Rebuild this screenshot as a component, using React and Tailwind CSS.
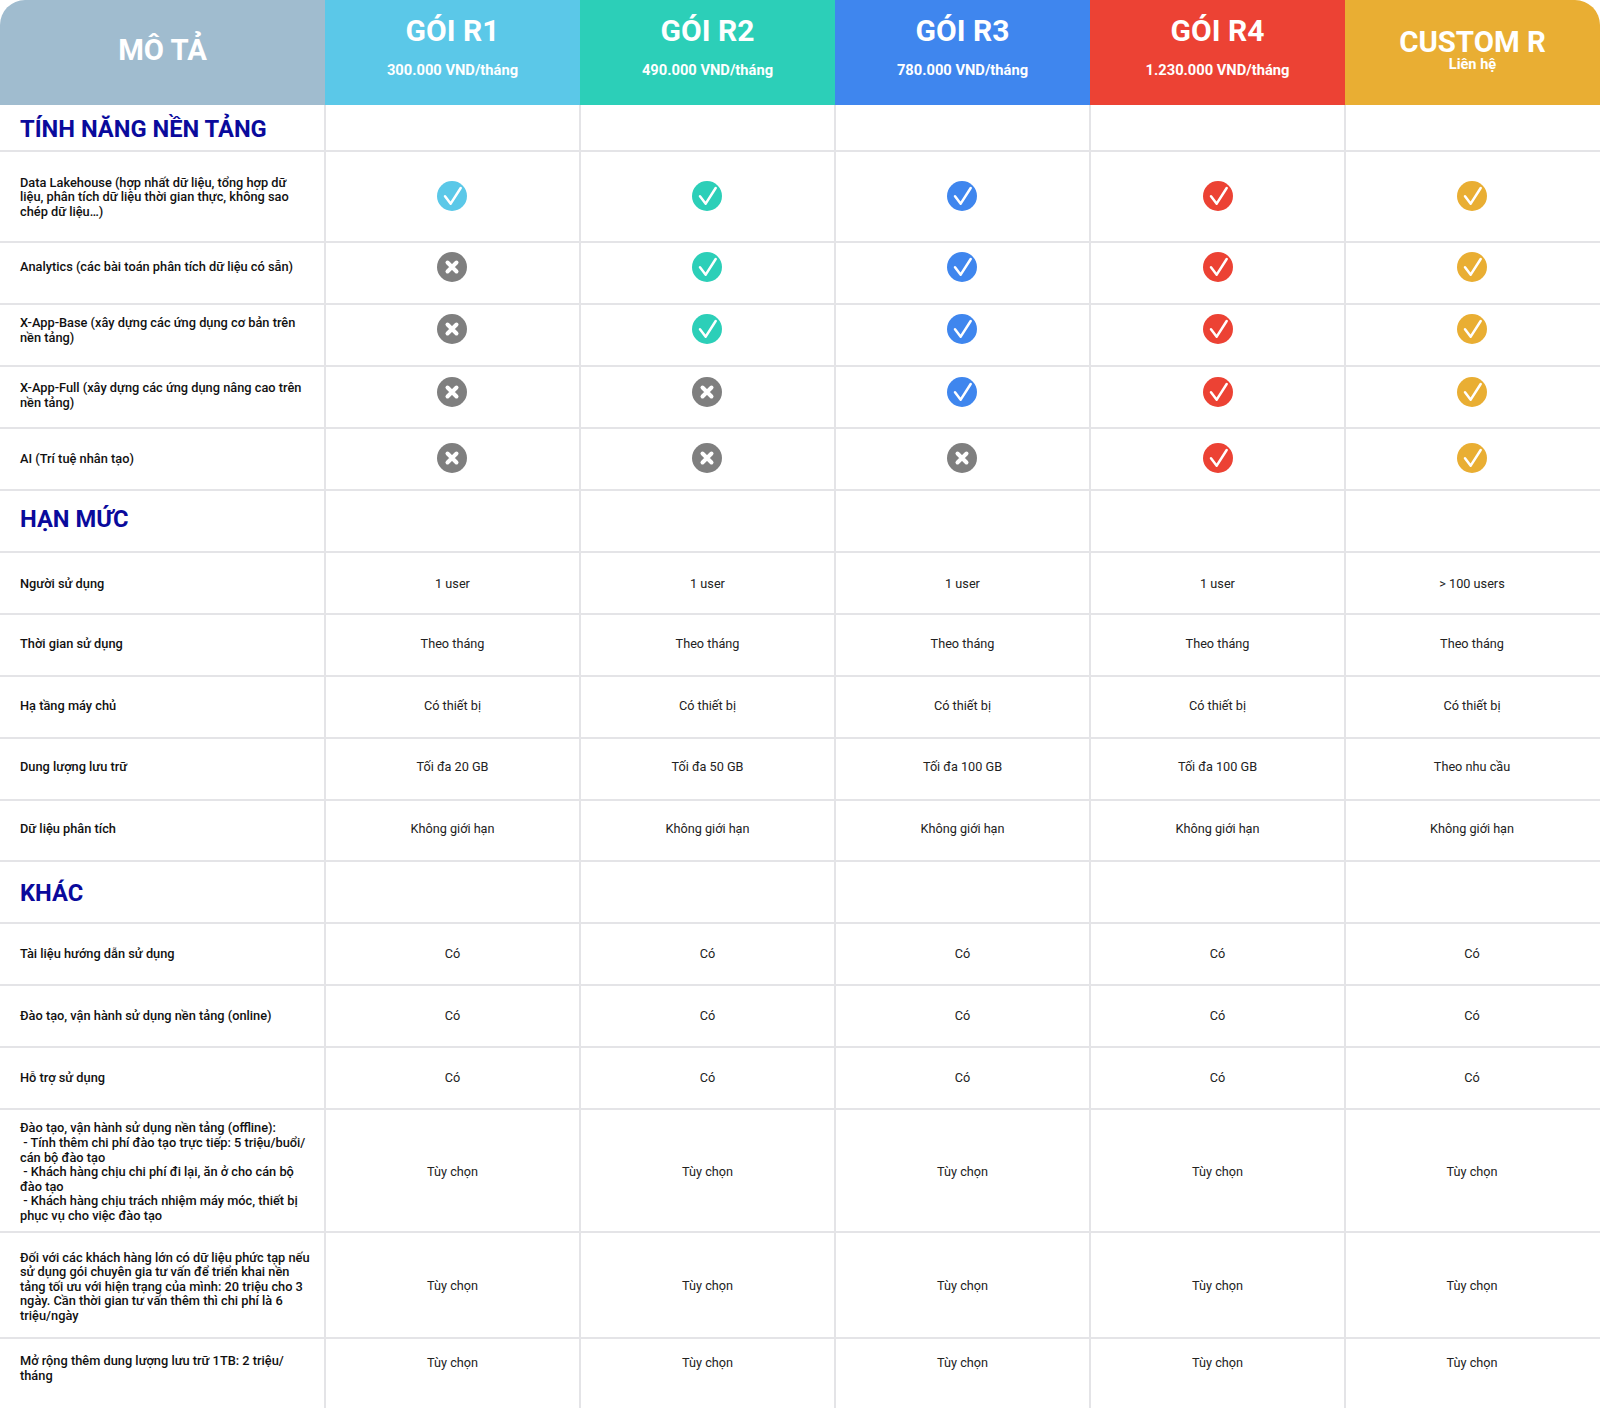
import React from "react";

const plans = [
  { name: "GÓI R1", price: "300.000 VND/tháng", bg: "bg-[#5bc8e8]", fill: "#5bc8e8", shift: "pb-[14px]" },
  { name: "GÓI R2", price: "490.000 VND/tháng", bg: "bg-[#2ccfb8]", fill: "#2ccfb8", shift: "pb-[14px]" },
  { name: "GÓI R3", price: "780.000 VND/tháng", bg: "bg-[#3f86ee]", fill: "#3f86ee", shift: "pb-[13px]" },
  { name: "GÓI R4", price: "1.230.000 VND/tháng", bg: "bg-[#ec4234]", fill: "#ec4234", shift: "pb-[13px]" },
];

const gold = "#e9ae33";
const fills = [...plans.map((p) => p.fill), gold];

// y = có, n = không
const features = [
  { label: "Data Lakehouse (hợp nhất dữ liệu, tổng hợp dữ\nliệu, phân tích dữ liệu thời gian thực, không sao\nchép dữ liệu…)", marks: "yyyyy", h: "h-[91px]", labelPad: "pt-[2px]", pad: "pb-[2px]" },
  { label: "Analytics (các bài toán phân tích dữ liệu có sẵn)", marks: "nyyyy", h: "h-[62px]", labelPad: "pb-[12px]", pad: "pb-[13px]" },
  { label: "X-App-Base (xây dựng các ứng dụng cơ bản trên\nnền tảng)", marks: "nyyyy", h: "h-[62px]", labelPad: "pb-[8px]", pad: "pb-[12px]" },
  { label: "X-App-Full (xây dựng các ứng dụng nâng cao trên\nnền tảng)", marks: "nnyyy", h: "h-[62px]", labelPad: "pb-[2px]", pad: "pb-[10px]" },
  { label: "AI (Trí tuệ nhân tạo)", marks: "nnnyy", h: "h-[62px]", labelPad: "pb-0", pad: "pb-[3px]" },
];

const limits = [
  { label: "Người sử dụng", cells: ["1 user", "1 user", "1 user", "1 user", "> 100 users"], h: "h-[62px]", labelPad: "pt-[2px]", pad: "pt-[2px]" },
  { label: "Thời gian sử dụng", cells: ["Theo tháng", "Theo tháng", "Theo tháng", "Theo tháng", "Theo tháng"], h: "h-[62px]", labelPad: "pb-[1px]", pad: "pb-[2px]" },
  { label: "Hạ tầng máy chủ", cells: ["Có thiết bị", "Có thiết bị", "Có thiết bị", "Có thiết bị", "Có thiết bị"], h: "h-[62px]", labelPad: "pb-[1px]", pad: "pb-[2px]" },
  { label: "Dung lượng lưu trữ", cells: ["Tối đa 20 GB", "Tối đa 50 GB", "Tối đa 100 GB", "Tối đa 100 GB", "Theo nhu cầu"], h: "h-[62px]", labelPad: "pb-[4px]", pad: "pb-[4px]" },
  { label: "Dữ liệu phân tích", cells: ["Không giới hạn", "Không giới hạn", "Không giới hạn", "Không giới hạn", "Không giới hạn"], h: "h-[61px]", labelPad: "pb-[2px]", pad: "pb-[3px]" },
];

const co = ["Có", "Có", "Có", "Có", "Có"];
const tuyChon = ["Tùy chọn", "Tùy chọn", "Tùy chọn", "Tùy chọn", "Tùy chọn"];

const others = [
  { label: "Tài liệu hướng dẫn sử dụng", cells: co, h: "h-[62px]", labelPad: "", pad: "" },
  { label: "Đào tạo, vận hành sử dụng nền tảng (online)", cells: co, h: "h-[62px]", labelPad: "", pad: "" },
  { label: "Hỗ trợ sử dụng", cells: co, h: "h-[62px]", labelPad: "", pad: "" },
  {
    label: "Đào tạo, vận hành sử dụng nền tảng (offline):\n - Tính thêm chi phí đào tạo trực tiếp: 5 triệu/buổi/\ncán bộ đào tạo\n - Khách hàng chịu chi phí đi lại, ăn ở cho cán bộ\nđào tạo\n - Khách hàng chịu trách nhiệm máy móc, thiết bị\nphục vụ cho việc đào tạo",
    cells: tuyChon,
    h: "h-[123px]",
    labelPad: "pt-[4px]",
    pad: "pt-[2px]",
  },
  {
    label: "Đối với các khách hàng lớn có dữ liệu phức tạp nếu\nsử dụng gói chuyên gia tư vấn để triển khai nền\ntảng tối ưu với hiện trạng của mình: 20 triệu cho 3\nngày. Cần thời gian tư vấn thêm thì chi phí là 6\ntriệu/ngày",
    cells: tuyChon,
    h: "h-[106px]",
    labelPad: "pt-[4px]",
    pad: "pt-[2px]",
  },
  { label: "Mở rộng thêm dung lượng lưu trữ 1TB: 2 triệu/\ntháng", cells: tuyChon, h: "h-[72px]", labelPad: "pb-[11px]", pad: "pb-[23px]" },
];

const rowGrid = "grid grid-cols-[326px_255px_255px_255px_255px_254px]";
const headGrid = "grid grid-cols-[325px_255px_255px_255px_255px_255px]";
const cellLine = "border-r-2 border-[#e4e4e7]";

function Check({ fill, className }) {
  return (
    <svg className={className} width="30" height="30" viewBox="0 0 30 30">
      <circle cx="15" cy="15" r="15" fill={fill} />
      <path d="M8 15.3l5.7 7.4L23.7 7" fill="none" stroke="#fff" strokeWidth="2.5" strokeLinecap="round" strokeLinejoin="round" />
    </svg>
  );
}

function Cross() {
  return (
    <svg className="mr-[2px]" width="30" height="30" viewBox="0 0 30 30">
      <circle cx="15" cy="15" r="15" fill="#7f7f7f" />
      <path d="M10.5 10.5l9 9M19.5 10.5l-9 9" fill="none" stroke="#fff" strokeWidth="4" strokeLinecap="round" />
    </svg>
  );
}

function Row({ label, h, labelPad, pad, children }) {
  return (
    <div className={`${rowGrid} ${h} border-b-2 border-[#e4e4e7]`}>
      <div className={`${cellLine} ${labelPad} flex items-center pl-5`}>
        <p className="whitespace-pre-wrap text-[12.8px] leading-[14.6px] font-medium text-[#111]">{label}</p>
      </div>
      {children.map((c, i) => (
        <div
          key={i}
          className={`${i < 4 ? cellLine : ""} ${i === 4 && typeof c === "string" ? "pr-[2px]" : ""} ${pad} flex items-center justify-center text-[12.7px] text-[#222]`}
        >
          {c}
        </div>
      ))}
    </div>
  );
}

function Section({ title, h, pad }) {
  return (
    <div className={`${rowGrid} ${h} border-b-2 border-[#e4e4e7]`}>
      <div className={`${cellLine} ${pad} flex items-center pl-5`}>
        <h2 className="text-[23.7px] font-bold text-[#0a0a9c]">{title}</h2>
      </div>
      {[0, 1, 2, 3, 4].map((i) => (
        <div key={i} className={i < 4 ? cellLine : ""} />
      ))}
    </div>
  );
}

export default function App() {
  return (
    <div className="w-[1600px] h-[1408px] overflow-hidden bg-white font-['Roboto',sans-serif]">
      <div className={`${headGrid} h-[105px] text-white`}>
        <div className="bg-[#a0bccf] rounded-tl-[25px] flex items-center justify-center pb-[4px]">
          <h1 className="text-[29.3px] font-bold">MÔ TẢ</h1>
        </div>
        {plans.map((p) => (
          <div key={p.name} className={`${p.bg} ${p.shift} flex flex-col items-center justify-center gap-[12px]`}>
            <h2 className="text-[30px] leading-[36px] font-bold">{p.name}</h2>
            <p className="text-[14.7px] leading-[18px] font-bold">{p.price}</p>
          </div>
        ))}
        <div className="bg-[#e9ae33] rounded-tr-[25px] flex flex-col items-center justify-center pb-[6px]">
          <h2 className="text-[29.4px] leading-[30px] font-bold">CUSTOM R</h2>
          <p className="text-[14.6px] leading-[15px] font-bold">Liên hệ</p>
        </div>
      </div>

      <Section title="TÍNH NĂNG NỀN TẢNG" h="h-[47px]" pad="pt-[4px]" />
      {features.map((f) => (
        <Row key={f.label} label={f.label} h={f.h} labelPad={f.labelPad} pad={f.pad}>
          {[...f.marks].map((m, i) =>
            m === "y" ? <Check key={i} fill={fills[i]} className={i === 3 ? "" : "mr-[2px]"} /> : <Cross key={i} />
          )}
        </Row>
      ))}

      <Section title="HẠN MỨC" h="h-[62px]" pad="pb-[2px]" />
      {limits.map((r) => (
        <Row key={r.label} label={r.label} h={r.h} labelPad={r.labelPad} pad={r.pad}>
          {r.cells}
        </Row>
      ))}

      <Section title="KHÁC" h="h-[62px]" pad="pt-[4px]" />
      {others.map((r) => (
        <Row key={r.label} label={r.label} h={r.h} labelPad={r.labelPad} pad={r.pad}>
          {r.cells}
        </Row>
      ))}
    </div>
  );
}
